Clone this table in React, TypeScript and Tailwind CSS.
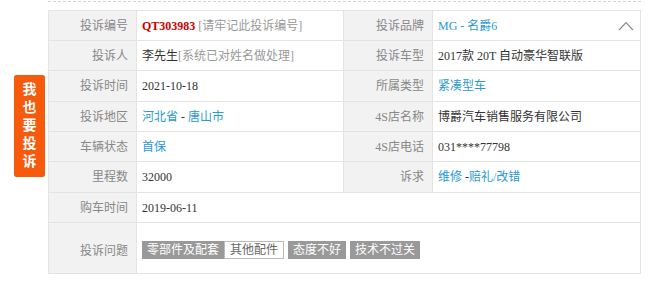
const font = { fontFamily: '"Liberation Serif", "Noto Sans CJK SC", serif' };

type Cell = { label: string; value: React.ReactNode };

const rows: [Cell, Cell, number][] = [
  [
    {
      label: "投诉编号",
      value: (
        <span>
          <span className="font-bold text-[#cc0000]">QT303983</span>
          <span className="text-[#999]"> [请牢记此投诉编号]</span>
        </span>
      ),
    },
    {
      label: "投诉品牌",
      value: (
        <div className="flex w-full items-center justify-between pr-[6px]">
          <span className="text-[#2a9ad4]">MG - 名爵6</span>
          <svg width="16" height="10" viewBox="0 0 16 10" fill="none">
            <path d="M1 9 L8 1.5 L15 9" stroke="#8a8a8a" strokeWidth="1.1" />
          </svg>
        </div>
      ),
    },
    30,
  ],
  [
    {
      label: "投诉人",
      value: (
        <span>
          <span className="text-[#333]">李先生</span>
          <span className="text-[#999]">[系统已对姓名做处理]</span>
        </span>
      ),
    },
    { label: "投诉车型", value: <span className="text-[#333]">2017款 20T 自动豪华智联版</span> },
    30,
  ],
  [
    { label: "投诉时间", value: <span className="text-[#333]">2021-10-18</span> },
    { label: "所属类型", value: <span className="text-[#2a9ad4]">紧凑型车</span> },
    31,
  ],
  [
    {
      label: "投诉地区",
      value: (
        <span>
          <span className="text-[#2a9ad4]">河北省</span>
          <span className="text-[#333]"> - </span>
          <span className="text-[#2a9ad4]">唐山市</span>
        </span>
      ),
    },
    { label: "4S店名称", value: <span className="text-[#333]">博爵汽车销售服务有限公司</span> },
    30,
  ],
  [
    { label: "车辆状态", value: <span className="text-[#2a9ad4]">首保</span> },
    { label: "4S店电话", value: <span className="text-[#333]">031****77798</span> },
    30,
  ],
  [
    { label: "里程数", value: <span className="text-[#333]">32000</span> },
    {
      label: "诉求",
      value: (
        <span>
          <span className="text-[#2a9ad4]">维修</span>
          <span className="text-[#333]"> -</span>
          <span className="text-[#2a9ad4]">赔礼/改错</span>
        </span>
      ),
    },
    31,
  ],
];

const tags = [
  { text: "零部件及配套", active: true },
  { text: "其他配件", active: false },
  { text: "态度不好", active: true },
  { text: "技术不过关", active: true },
];

function Label({ children, h }: { children: React.ReactNode; h: number }) {
  return (
    <div
      className="flex items-center justify-end border-r border-b border-[#e4e4e4] bg-[#f2f2f2] pr-[8px] text-[12px] text-[#888]"
      style={{ height: h }}
    >
      {children}
    </div>
  );
}

function Value({ children, h, last }: { children: React.ReactNode; h: number; last?: boolean }) {
  return (
    <div
      className={`flex items-center border-b border-[#e4e4e4] pl-[5px] text-[12px] whitespace-pre ${last ? "" : "border-r"}`}
      style={{ height: h }}
    >
      {children}
    </div>
  );
}

export default function App() {
  return (
    <div className="relative h-[281px] w-[660px] overflow-hidden bg-white" style={font}>
      <div className="ml-[48px] mt-[1px] w-[593px] border-t border-dashed border-[#d6d6d6]" />

      <div className="ml-[48px] mt-[8px] w-[593px] border-t border-r border-l border-[#e4e4e4]">
        <div className="grid grid-cols-[88px_207px_89px_1fr]">
          {rows.map(([a, b, h], i) => (
            <div key={i} className="contents">
              <Label h={h}>{a.label}</Label>
              <Value h={h}>{a.value}</Value>
              <Label h={h}>{b.label}</Label>
              <Value h={h} last>
                {b.value}
              </Value>
            </div>
          ))}
        </div>
        <div className="grid grid-cols-[88px_1fr]">
          <Label h={30}>购车时间</Label>
          <Value h={30} last>
            <span className="text-[#333]">2019-06-11</span>
          </Value>
          <div className="flex h-[51px] items-center justify-end border-r border-b border-[#e4e4e4] bg-[#f2f2f2] pr-[8px] pt-[6px] text-[12px] text-[#888]">
            投诉问题
          </div>
          <div className="flex h-[51px] items-center gap-[4px] border-b border-[#e4e4e4] pl-[5px] pt-[3px]">
            {tags.map((t, i) => (
              <span
                key={t.text}
                className={`flex h-[18px] items-center px-[5px] text-[12px] leading-none ${
                  t.active ? "bg-[#999] text-white" : "border border-[#bbb] bg-white text-[#666]"
                } ${i === 1 ? "-ml-[4px]" : ""}`}
              >
                {t.text}
              </span>
            ))}
          </div>
        </div>
      </div>

      <div className="absolute top-[75px] left-[14px] flex h-[102px] w-[31px] flex-col items-center justify-center rounded-[3px] bg-[#f65a0c] text-[14px] leading-[18px] font-bold text-white shadow-[0_0_1px_rgba(0,0,0,0.3)]">
        <span>我</span>
        <span>也</span>
        <span>要</span>
        <span>投</span>
        <span>诉</span>
      </div>
    </div>
  );
}
